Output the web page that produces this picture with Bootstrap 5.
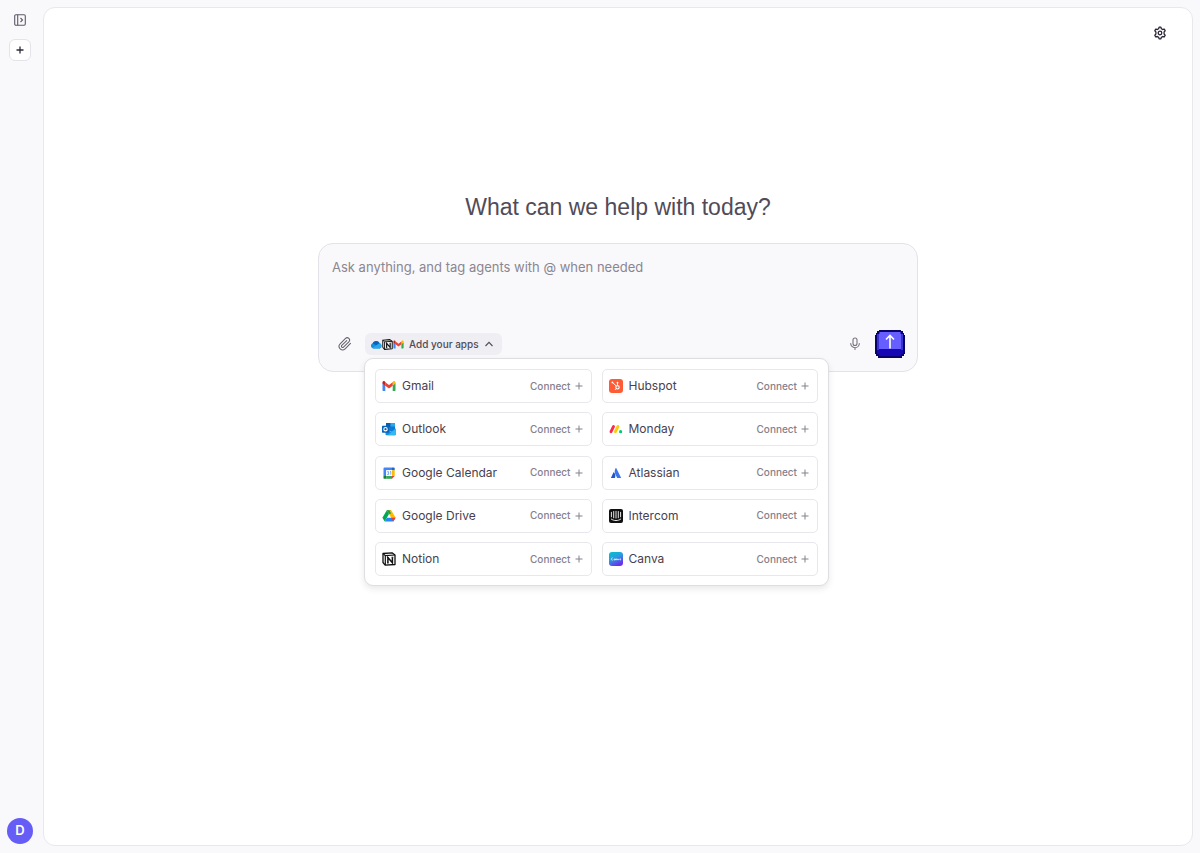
<!DOCTYPE html>
<html lang="en">
<head>
<meta charset="utf-8">
<meta name="viewport" content="width=device-width, initial-scale=1">
<title>Assistant</title>
<link href="https://cdn.jsdelivr.net/npm/bootstrap@5.3.0/dist/css/bootstrap.min.css" rel="stylesheet">
<style>
  body { font-family: Inter, "Liberation Sans", sans-serif; background: #f9f9fb; color: #514b58; }
  svg { display: block; flex: none; }
  .rail { width: 40px; padding: 9px 0; gap: 8px; }
  .rail-btn { width: 22px; height: 22px; border-radius: 6px; }
  .new-btn { background: #fff; border: 1px solid #e4e3e8 !important; color: #2f2b3a; }
  .avatar-btn { width: 26px; height: 26px; background: #655df6; color: #fff; font-size: 13px; font-weight: 600; }
  .stage { margin: 7px 7px 7px 3px; border: 1px solid #e8e7ec; border-radius: 12px; background: #fff; }
  .gear-btn { top: 15px; right: 22px; width: 20px; height: 20px; color: #2b2635; }
  .chat { max-width: 600px; padding-top: 184px; }
  .title { font-family: "Liberation Sans", sans-serif; font-size: 23px; line-height: 30px; margin-bottom: 21px; font-weight: 400; color: #514b58; }
  .composer { border: 1px solid #e3e2e8; border-radius: 15px; background: #f9f9fb; padding: 12px 12px 12px 13px; }
  .ask { font-size: 13px; line-height: 22px; height: 73px; resize: none; color: #514b58; }
  .ask::placeholder { color: #8b8691; opacity: 1; }
  .ask:focus { background: transparent; box-shadow: none; }
  .tools { height: 30px; gap: 7px; }
  .clip-btn { width: 26px; height: 26px; color: #68636f; }
  .mic-btn { width: 26px; height: 26px; color: #77727e; }
  .apps-btn { height: 22px; padding: 0 8px 0 6px; border-radius: 6px; background: #efeef2; font-size: 10px; font-weight: 500; gap: 5px; color: #514b58; }
  .menu-panel { top: 25px; left: -1px; width: 465px; height: 228px; padding: 10px 10px 9px; border: 1px solid #dedde2; border-radius: 9px; background: #fff; box-shadow: 0 3px 6px rgba(40, 35, 50, .1); }
  .app-grid { display: grid; grid-template-columns: 1fr 1fr; column-gap: 10px; align-content: space-between; height: 100%; }
  .app-btn { height: 34px; padding: 0 8px 0 6px; border: 1px solid #e8e7eb !important; border-radius: 5px; background: #fff; font-size: 12px; gap: 6px; color: #47414f; }
  .app-btn:hover, .apps-btn:hover { color: #514b58; background: #f5f4f7; }
  .app-name { font-weight: 400; }
  .connect { font-size: 10px; font-weight: 500; color: #85808b; gap: 4px; }
</style>
</head>
<body>
<svg class="d-none" aria-hidden="true">
  <symbol id="gmail" viewBox="0 0 14 14">
    <path d="M0.5 4v7.2c0 .5.3.8.8.8h2V6.2z" fill="#4285f4"/>
    <path d="M13.500 4v7.200c0 .5-.3.8-.8.8h-2V6.200z" fill="#34a853"/>
    <path d="M10.700 3.200v3.400l2.800-2.100V3.400c0-1.300-1.300-1.900-2.200-1.200z" fill="#fbbc04"/>
    <path d="M3.300 6.700V3.200L7 6l3.700-2.800v3.500L7 9.500z" fill="#ea4335"/>
    <path d="M.5 3.400v1.200l2.800 2.100V3.200l-.6-.9C1.800 1.600.5 2.200.5 3.400z" fill="#c5221f"/>
  </symbol>
  <symbol id="notion" viewBox="0 0 14 14">
    <path d="M1 1.500 10 .8l3 2.200v9.500l-9.800.7L1 10.500z" fill="#fff" stroke="#111" stroke-width="1.300" stroke-linejoin="round"/>
    <path d="M1 1.500 3.300 3.600 13 3M3.300 3.600v9.300" fill="none" stroke="#111" stroke-width="1.200"/>
    <path d="M5.900 11V5.500l4.500 5.200V5.300" fill="none" stroke="#111" stroke-width="1.500"/>
    <path d="M4.900 5.500h1.600M9.600 5.200h1.700M5 11.100h1.700" fill="none" stroke="#111" stroke-width=".8"/>
  </symbol>
  <symbol id="onedrive" viewBox="0 0 14 14">
    <path d="M3 12.200A3.500 3.500 0 0 1 2 5.500 5 5 0 0 1 10.800 5 3.800 3.800 0 0 1 11 12.200z" fill="#168fe0"/>
    <path d="M2 5.500A5 5 0 0 1 10.800 5L6.500 8z" fill="#0b62b9"/>
    <path d="M1.500 11.500 10.800 5.800a3.300 3.300 0 0 1 .2 6.400H3z" fill="#29a8ea"/>
  </symbol>
  <symbol id="plus" viewBox="0 0 8 8"><path d="M4 .5v7M.5 4h7" fill="none" stroke="currentColor" stroke-width="1"/></symbol>
</svg>

<div class="d-flex min-vh-100">
  <nav class="rail d-flex flex-column align-items-center flex-shrink-0" aria-label="Sidebar">
    <button type="button" class="rail-btn btn p-0 border-0 d-flex align-items-center justify-content-center" aria-label="Open sidebar">
      <svg width="12" height="12" viewBox="0 0 12 12" fill="none" stroke="#5f5a68" stroke-width="1.100"><rect x=".7" y=".7" width="10.600" height="10.600" rx="1.200"/><path d="M3.700.7v10.600M6.500 4l2 2-2 2"/></svg>
    </button>
    <button type="button" class="rail-btn new-btn btn p-0 d-flex align-items-center justify-content-center" aria-label="New chat">
      <svg width="8" height="8" viewBox="0 0 8 8" fill="none" stroke="currentColor" stroke-width="1.300"><path d="M4 .5v7M.5 4h7"/></svg>
    </button>
    <button type="button" class="avatar-btn btn p-0 border-0 rounded-circle mt-auto d-flex align-items-center justify-content-center" aria-label="Account">D</button>
  </nav>

  <main class="stage position-relative flex-grow-1">
    <button type="button" class="gear-btn btn p-0 border-0 position-absolute d-flex align-items-center justify-content-center" aria-label="Settings">
      <svg width="14" height="14" viewBox="0 0 14 14" fill="none" stroke="currentColor" stroke-width="1.300" stroke-linejoin="round"><path d="M5.600 2.700 6.100 1.200h1.800l.5 1.500 1.300.8 1.600-.4.900 1.600L11.100 5.900v2.200l1.100 1.200-.9 1.600-1.600-.4-1.300.8-.5 1.500H6.100l-.5-1.500-1.300-.8-1.600.4-.9-1.600L2.900 8.100V5.900L1.800 4.700l.9-1.600 1.600.4z"/><circle cx="7" cy="7" r="1.800"/></svg>
    </button>

    <div class="chat mx-auto">
      <h1 class="title text-center">What can we help with today?</h1>
      <form class="composer">
        <textarea class="ask form-control border-0 p-0 bg-transparent" aria-label="Message" placeholder="Ask anything, and tag agents with @ when needed"></textarea>
        <div class="tools d-flex align-items-center">
          <button type="button" class="clip-btn btn p-0 border-0 d-flex align-items-center justify-content-center" aria-label="Attach file">
            <svg width="14" height="14" viewBox="0 0 24 24" fill="none" stroke="currentColor" stroke-width="1.800" stroke-linecap="round" stroke-linejoin="round"><path d="m21.400 11-9.200 9.200a6 6 0 0 1-8.500-8.500l9.200-9.200a4 4 0 0 1 5.700 5.700l-9.200 9.200a2 2 0 0 1-2.900-2.900l8.500-8.400"/></svg>
          </button>
          <div class="position-relative">
            <button type="button" class="apps-btn btn border-0 d-flex align-items-center" aria-expanded="true" aria-controls="apps">
              <span class="d-flex">
                <svg width="11" height="11"><use href="#onedrive"/></svg>
                <svg width="11" height="11"><use href="#notion"/></svg>
                <svg width="11" height="11"><use href="#gmail"/></svg>
              </span>
              <span>Add your apps</span>
              <svg width="10" height="10" viewBox="0 0 10 10" fill="none" stroke="currentColor" stroke-width="1.100"><path d="m1.500 7 3.500-3.700L8.500 7"/></svg>
            </button>
            <div class="menu-panel position-absolute" id="apps">
              <div class="app-grid">
                <button type="button" class="app-btn btn d-flex align-items-center"><svg width="14" height="14"><use href="#gmail"/></svg><span class="app-name">Gmail</span><span class="connect ms-auto d-flex align-items-center">Connect <svg width="8" height="8"><use href="#plus"/></svg></span></button>
                <button type="button" class="app-btn btn d-flex align-items-center"><svg width="14" height="14" viewBox="0 0 14 14"><rect width="14" height="14" rx="3" fill="#ff5c35"/><g fill="none" stroke="#fff"><circle cx="8.500" cy="8.300" r="1.700" stroke-width="1.100"/><path d="M8.500 6.600V3.500M3.200 3.200l4 3.700M7.300 9.500l-1.500 1.500" stroke-width=".9"/></g><circle cx="8.500" cy="3.700" r=".9" fill="#fff"/><circle cx="3.400" cy="3.400" r=".9" fill="#fff"/></svg><span class="app-name">Hubspot</span><span class="connect ms-auto d-flex align-items-center">Connect <svg width="8" height="8"><use href="#plus"/></svg></span></button>
                <button type="button" class="app-btn btn d-flex align-items-center"><svg width="14" height="14" viewBox="0 0 14 14"><rect x="4" y="1" width="9" height="8" rx=".6" fill="#0f78d4"/><path d="M4 1h4.500v4H4z" fill="#0a5eb0"/><path d="M8.500 1H13v3.500H8.500z" fill="#29a8ea"/><path d="M3.500 6.500 8.800 9.500l5-3V12.400a.8.8 0 0 1-.8.8H4.300a.8.8 0 0 1-.8-.8z" fill="#1490df"/><path d="m13.800 6.500-8 6.700H13a.8.8 0 0 0 .8-.8z" fill="#35b8f1"/><rect x="0" y="3.700" width="7" height="7" rx=".6" fill="#0864b8"/><circle cx="3.500" cy="7.200" r="1.700" fill="none" stroke="#fff" stroke-width="1.100"/></svg><span class="app-name">Outlook</span><span class="connect ms-auto d-flex align-items-center">Connect <svg width="8" height="8"><use href="#plus"/></svg></span></button>
                <button type="button" class="app-btn btn d-flex align-items-center"><svg width="14" height="14" viewBox="0 0 14 14" stroke-linecap="round"><path d="M4.500 4.600 2 9.700" stroke="#f62b54" stroke-width="2.900"/><path d="M8.900 4.600 6.400 9.700" stroke="#fc0" stroke-width="2.900"/><circle cx="11.600" cy="9.700" r="1.600" fill="#00ca72"/></svg><span class="app-name">Monday</span><span class="connect ms-auto d-flex align-items-center">Connect <svg width="8" height="8"><use href="#plus"/></svg></span></button>
                <button type="button" class="app-btn btn d-flex align-items-center"><svg width="14" height="14" viewBox="0 0 14 14"><path d="M1.500 2.300a.9.900 0 0 1 .9-.9H10v2.800H4.200V10H1.500z" fill="#4285f4"/><path d="M10 1.400h1.800a.9.900 0 0 1 .9.900v1.900H10z" fill="#1967d2"/><path d="M10 4.200h2.700V10H10z" fill="#fbbc04"/><path d="M4.200 10H10v2.800H4.200z" fill="#34a853"/><path d="M1.500 10h2.700v2.800H2.400a.9.900 0 0 1-.9-.9z" fill="#188038"/><path d="M10 10h2.700L10 12.800z" fill="#ea4335"/><path d="M4.200 4.200H10V10H4.200z" fill="#fff"/><path d="M5.200 5.700h1.400v1L5.900 7l.7.400v1.100H5.200M8 5.800l.8-.3v3.200" fill="none" stroke="#4285f4" stroke-width=".7"/></svg><span class="app-name">Google Calendar</span><span class="connect ms-auto d-flex align-items-center">Connect <svg width="8" height="8"><use href="#plus"/></svg></span></button>
                <button type="button" class="app-btn btn d-flex align-items-center"><svg width="14" height="14" viewBox="0 0 14 14"><path d="M4.900 6.300c-.2-.2-.4-.2-.5.100L2 11.700c-.1.200 0 .4.300.4h3.300c.2 0 .3-.1.400-.3.800-1.800.3-4.200-1.100-5.500z" fill="#2456c8"/><path d="M6.700 2.100c-1.400 2.200-1.200 4.600-.3 6.400l1.700 3.300c.1.200.2.300.4.300h3.300c.3 0 .4-.2.300-.4L7.200 2.100c-.1-.3-.4-.3-.5 0z" fill="#3d75ee"/></svg><span class="app-name">Atlassian</span><span class="connect ms-auto d-flex align-items-center">Connect <svg width="8" height="8"><use href="#plus"/></svg></span></button>
                <button type="button" class="app-btn btn d-flex align-items-center"><svg width="14" height="14" viewBox="0 0 14 14"><path d="M4.800 1.200 7 5 2.700 12.500.4 8.700z" fill="#00a94f"/><path d="M4.800 1.200h4.400L7 5z" fill="#188038"/><path d="M9.200 1.200 13.600 8.700H9.200L4.800 1.200z" fill="#ffba00"/><path d="M4.800 1.200h2.500L9.200 4.500 7 5z" fill="#12a150"/><path d="M4.900 8.700h8.700l-2.300 3.800H2.700z" fill="#2684fc"/><path d="M9.200 8.700h4.400l-2.300 3.800z" fill="#ea4335"/></svg><span class="app-name">Google Drive</span><span class="connect ms-auto d-flex align-items-center">Connect <svg width="8" height="8"><use href="#plus"/></svg></span></button>
                <button type="button" class="app-btn btn d-flex align-items-center"><svg width="14" height="14" viewBox="0 0 14 14"><rect width="14" height="14" rx="2" fill="#111"/><path d="M2.400 3.300v4.500M4.700 2.500v6.300M7 2.300v6.800M9.300 2.500v6.300M11.600 3.300v4.500M2.300 10.100c2.800 2 6.600 2 9.400 0" fill="none" stroke="#fff" stroke-width=".9" stroke-linecap="round"/></svg><span class="app-name">Intercom</span><span class="connect ms-auto d-flex align-items-center">Connect <svg width="8" height="8"><use href="#plus"/></svg></span></button>
                <button type="button" class="app-btn btn d-flex align-items-center"><svg width="14" height="14"><use href="#notion"/></svg><span class="app-name">Notion</span><span class="connect ms-auto d-flex align-items-center">Connect <svg width="8" height="8"><use href="#plus"/></svg></span></button>
                <button type="button" class="app-btn btn d-flex align-items-center"><svg width="14" height="14" viewBox="0 0 14 14"><defs><linearGradient id="cv" x1="0" y1="0" x2=".5" y2="1"><stop offset="0" stop-color="#00c4cc"/><stop offset=".5" stop-color="#2a9be0"/><stop offset="1" stop-color="#6a32ee"/></linearGradient></defs><rect width="14" height="14" rx="3" fill="url(#cv)"/><path d="M3.800 6a1 1.200 0 1 0 .1 2M5.900 7.900c-1.100.8-1.200-1.300 0-1.100v1.300l.9-1.300v1.300c.2-1 .9-1.800 1-.8v.8l.9-1.300.4 1.300.9-1.300M11.600 7.900c-1.100.8-1.200-1.300 0-1.100v1.300" fill="none" stroke="#fff" stroke-width=".6"/></svg><span class="app-name">Canva</span><span class="connect ms-auto d-flex align-items-center">Connect <svg width="8" height="8"><use href="#plus"/></svg></span></button>
              </div>
            </div>
          </div>
          <button type="button" class="mic-btn btn p-0 border-0 ms-auto d-flex align-items-center justify-content-center" aria-label="Dictate">
            <svg width="12" height="14" viewBox="0 0 12 14" fill="none" stroke="currentColor" stroke-width="1.100" stroke-linecap="round"><rect x="4" y="1" width="4" height="7.500" rx="2"/><path d="M1.700 6.500a4.300 4.200 0 0 0 8.600 0M6 10.700v1.800"/></svg>
          </button>
          <button type="submit" class="btn p-0 border-0" aria-label="Send">
            <svg width="30" height="28" viewBox="0 0 30 28"><g shape-rendering="crispEdges"><path d="M4 0h22v1h2v2h1v2h1v19h-1v2h-2v2H3v-2H1v-2H0V5h1V3h1V1h2z" fill="#07036b"/><path d="M4 2h22v2h2v16H2V4h2z" fill="#3a32cf"/><path d="M5 2h20v2h1v15H4V4h1z" fill="#665eff"/><path d="M2 20h2v-1h22v1h2v4h-2v2H4v-2H2z" fill="#1607b5"/></g><path d="M15 5v13.500M11 9.500 15 5.500l4 4" fill="none" stroke="#fff" stroke-width="1.600"/></svg>
          </button>
        </div>
      </form>
    </div>
  </main>
</div>
<script src="https://cdn.jsdelivr.net/npm/bootstrap@5.3.0/dist/js/bootstrap.bundle.min.js"></script>
</body>
</html>
